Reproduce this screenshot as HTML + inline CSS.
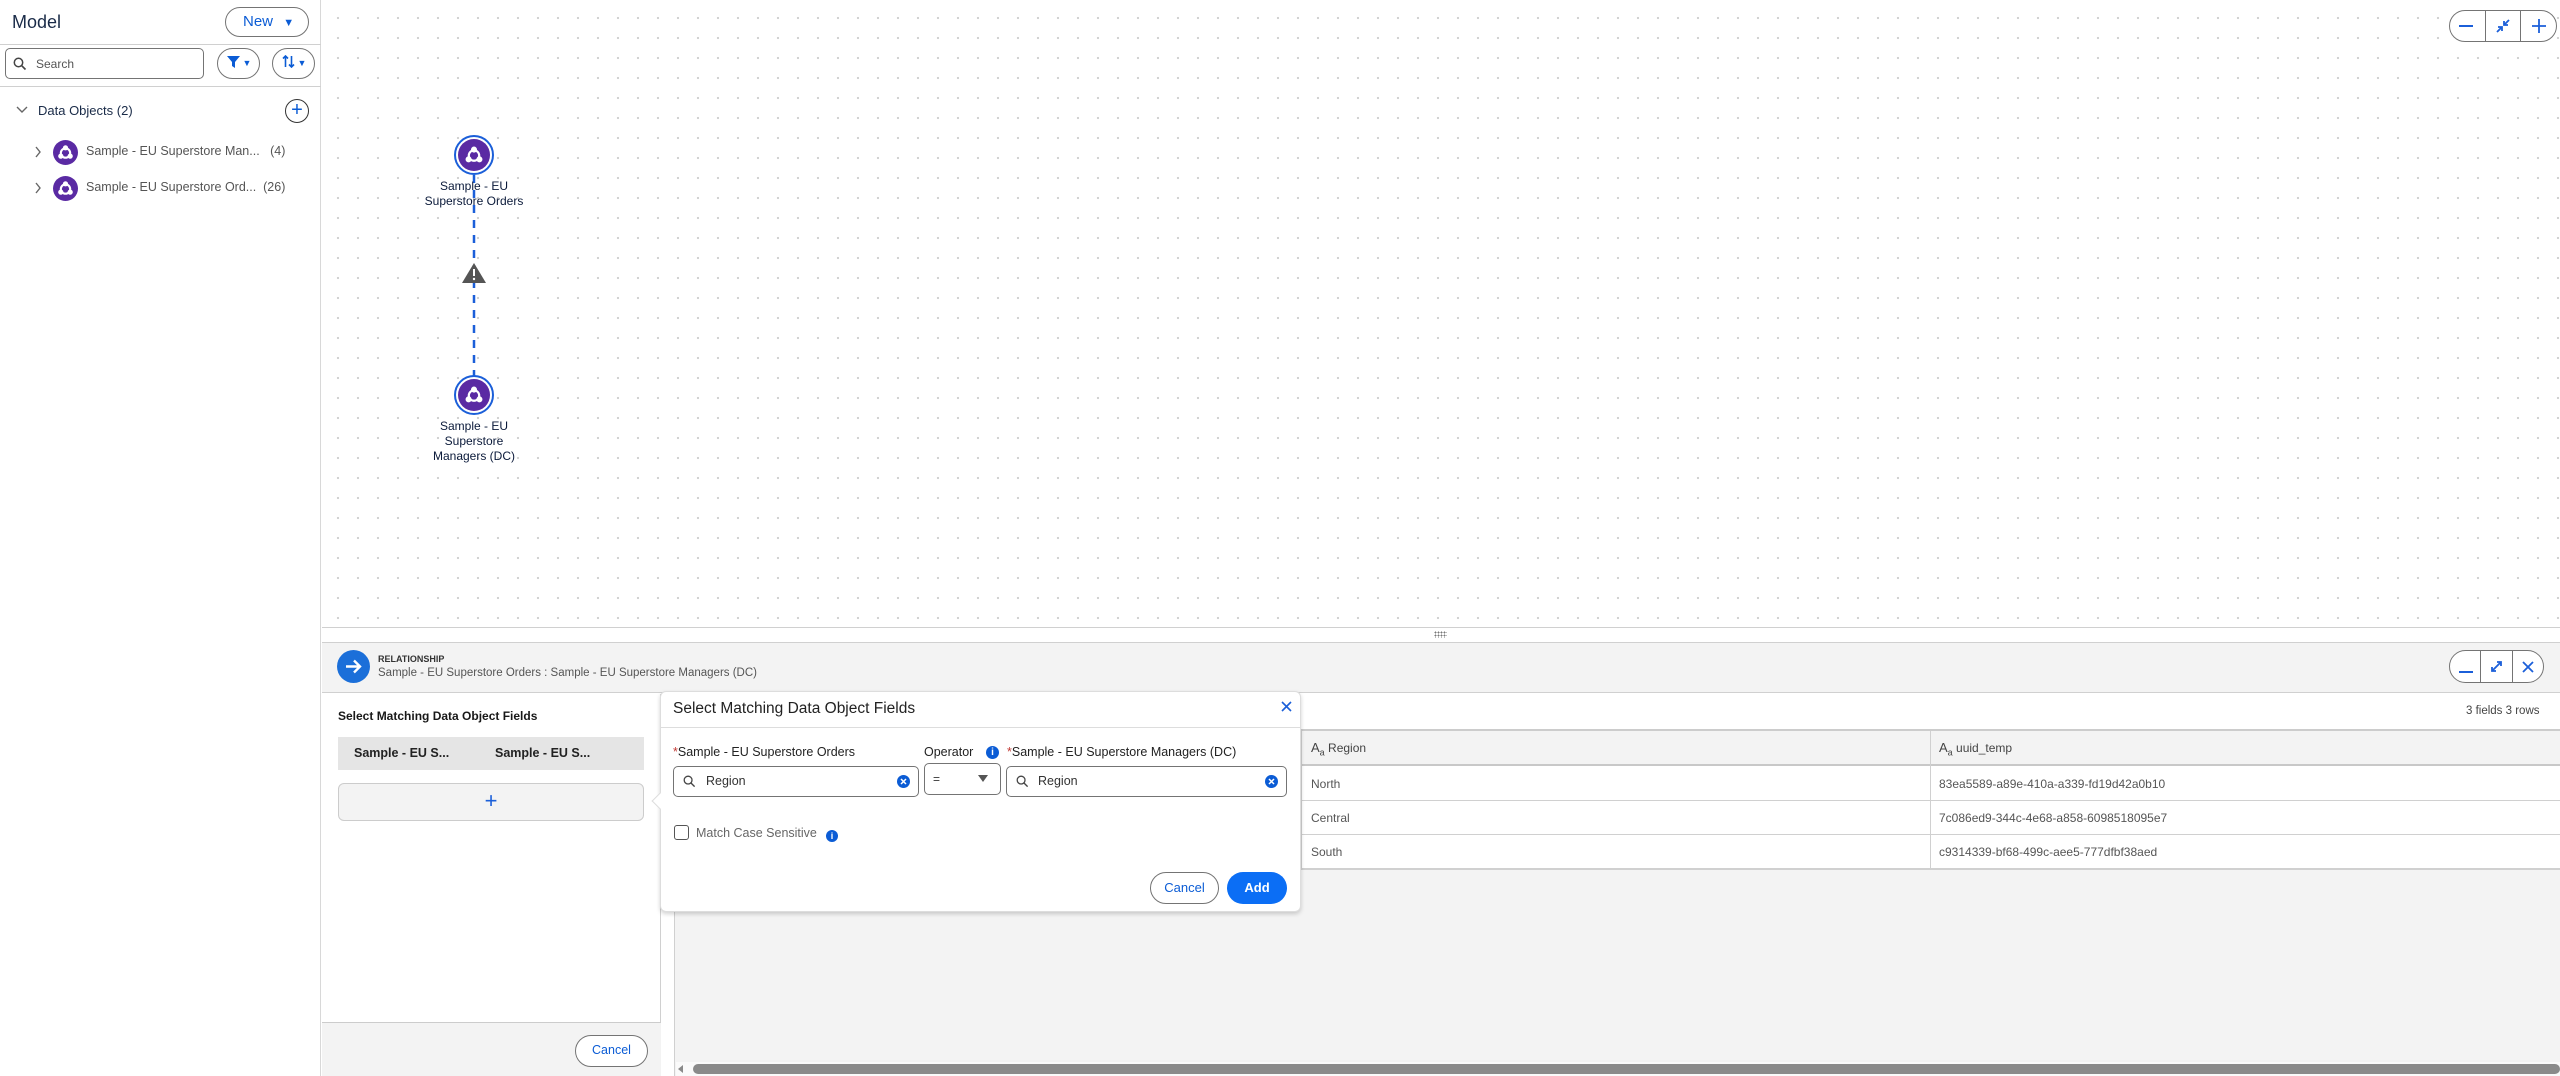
<!DOCTYPE html>
<html><head><meta charset="utf-8"><style>
*{box-sizing:border-box;margin:0;padding:0}
body{width:2560px;height:1076px;overflow:hidden;font-family:"Liberation Sans",sans-serif;background:#fff;position:relative;color:#181818}
.a{position:absolute}
.pill{border:1.5px solid #747474;border-radius:18px;background:#fff}
.blue{color:#0b5cd5}
.canvas{left:322px;top:0;width:2238px;height:627px;background-color:#fff;background-image:radial-gradient(circle,#cfcfcf 1px,transparent 1.3px);background-size:20px 20px;background-position:6px 8px}
.node{width:40px;height:40px;border-radius:50%;border:2px solid #1b5fd9;background:#fff;padding:2px}
.node div{width:100%;height:100%;border-radius:50%;background:#5a2aa3;display:flex;align-items:center;justify-content:center}
.lbl{font-size:12px;color:#0b1a3a;text-align:center;line-height:15px;width:120px;left:414px}
.hdr{font-size:12px;color:#444}
.cell{font-size:12px;color:#555}
</style></head><body>

<div class="a" style="left:0;top:0;width:321px;height:1076px;border-right:1px solid #d8d8d8;background:#fff">
 <div class="a" style="left:12px;top:12px;font-size:18px;color:#1a2b48">Model</div>
 <div class="a pill blue" style="left:225px;top:7px;width:84px;height:30px;font-size:15px;line-height:27px;padding-left:17px">New <span style="font-size:11px;margin-left:6px">&#9660;</span></div>
 <div class="a" style="left:0;top:44px;width:321px;border-top:1px solid #d0d0d0"></div>
 <div class="a" style="left:5px;top:48px;width:199px;height:31px;border:1px solid #747474;border-radius:5px">
  <svg class="a" style="left:7px;top:8px" width="14" height="14" viewBox="0 0 14 14"><circle cx="5.5" cy="5.5" r="4.2" fill="none" stroke="#444" stroke-width="1.5"/><path d="M8.6 8.6L12.5 12.5" stroke="#444" stroke-width="1.6"/></svg>
  <span class="a" style="left:30px;top:8px;font-size:12px;color:#555">Search</span>
 </div>
 <div class="a pill blue" style="left:217px;top:48px;width:43px;height:31px;border-radius:16px;font-size:9px;line-height:28px;padding-left:9px"><svg width="13" height="12" viewBox="0 0 13 12" style="vertical-align:-2px"><path d="M0 0H13L8 6V12L5 10V6Z" fill="#0b5cd5"/></svg> &#9660;</div>
 <div class="a pill blue" style="left:272px;top:48px;width:43px;height:31px;border-radius:16px;font-size:9px;line-height:28px;padding-left:9px"><svg width="13" height="13" viewBox="0 0 13 13" style="vertical-align:-2px"><path d="M3.5 12V1M1 3.5L3.5 1L6 3.5M9.5 1V12M7 9.5L9.5 12L12 9.5" fill="none" stroke="#0b5cd5" stroke-width="1.6"/></svg> &#9660;</div>
 <div class="a" style="left:0;top:86px;width:321px;border-top:1px solid #d0d0d0"></div>
 <svg class="a" style="left:16px;top:105px" width="12" height="10" viewBox="0 0 12 10"><path d="M1 2L6 7L11 2" fill="none" stroke="#666" stroke-width="1.4"/></svg>
 <div class="a" style="left:38px;top:103px;font-size:13px;color:#1a2b48">Data Objects (2)</div>
 <div class="a" style="left:285px;top:99px;width:24px;height:24px;border:1.3px solid #333;border-radius:50%;text-align:center;line-height:20px;font-size:20px;color:#0b5cd5">+</div>
 <svg class="a" style="left:34px;top:146px" width="8" height="12" viewBox="0 0 8 12"><path d="M2 1L6 6L2 11" fill="none" stroke="#666" stroke-width="1.4"/></svg>
 <svg class="a" style="left:34px;top:182px" width="8" height="12" viewBox="0 0 8 12"><path d="M2 1L6 6L2 11" fill="none" stroke="#666" stroke-width="1.4"/></svg>
 <svg class="a" style="left:53px;top:140px" width="25" height="25" viewBox="0 0 24 24"><circle cx="12" cy="12" r="12" fill="#5a2aa3"/><circle cx="12" cy="12.5" r="4.5" fill="none" stroke="#fff" stroke-width="2"/><circle cx="12" cy="7.5" r="2.5" fill="#fff"/><circle cx="7.5" cy="15.5" r="2.5" fill="#fff"/><circle cx="16.5" cy="15.5" r="2.5" fill="#fff"/></svg>
 <svg class="a" style="left:53px;top:176px" width="25" height="25" viewBox="0 0 24 24"><circle cx="12" cy="12" r="12" fill="#5a2aa3"/><circle cx="12" cy="12.5" r="4.5" fill="none" stroke="#fff" stroke-width="2"/><circle cx="12" cy="7.5" r="2.5" fill="#fff"/><circle cx="7.5" cy="15.5" r="2.5" fill="#fff"/><circle cx="16.5" cy="15.5" r="2.5" fill="#fff"/></svg>
 <div class="a" style="left:86px;top:144px;font-size:12.5px;color:#555">Sample - EU Superstore Man...&nbsp;&nbsp;&nbsp;(4)</div>
 <div class="a" style="left:86px;top:180px;font-size:12.5px;color:#555">Sample - EU Superstore Ord...&nbsp;&nbsp;(26)</div>
</div>

<div class="a canvas"></div>
<svg class="a" style="left:464px;top:175px" width="20" height="220" viewBox="0 0 20 220"><path d="M10 0V220" stroke="#1b5fd9" stroke-width="2.5" stroke-dasharray="8 7"/></svg>
<svg class="a" style="left:461px;top:262px" width="26" height="22" viewBox="0 0 26 22"><path d="M13 1L25 21H1Z" fill="#555"/><path d="M13 7V14" stroke="#fff" stroke-width="2"/><circle cx="13" cy="17" r="1.2" fill="#fff"/></svg>
<div class="a node" style="left:454px;top:135px"><div><svg width="26" height="26" viewBox="0 0 24 24"><circle cx="12" cy="12.5" r="4.8" fill="none" stroke="#fff" stroke-width="2"/><circle cx="12" cy="7" r="2.8" fill="#fff"/><circle cx="7" cy="16" r="2.8" fill="#fff"/><circle cx="17" cy="16" r="2.8" fill="#fff"/></svg></div></div>
<div class="a lbl" style="top:179px">Sample - EU<br>Superstore Orders</div>
<div class="a node" style="left:454px;top:375px"><div><svg width="26" height="26" viewBox="0 0 24 24"><circle cx="12" cy="12.5" r="4.8" fill="none" stroke="#fff" stroke-width="2"/><circle cx="12" cy="7" r="2.8" fill="#fff"/><circle cx="7" cy="16" r="2.8" fill="#fff"/><circle cx="17" cy="16" r="2.8" fill="#fff"/></svg></div></div>
<div class="a lbl" style="top:419px">Sample - EU<br>Superstore<br>Managers (DC)</div>

<div class="a pill" style="left:2449px;top:10px;width:108px;height:32px;border-radius:16px;display:flex">
 <div style="flex:1;border-right:1px solid #747474;position:relative"><div class="a" style="left:9px;top:14px;width:14px;height:2px;background:#1b5fd9"></div></div>
 <div style="flex:1;border-right:1px solid #747474;display:flex;align-items:center;justify-content:center"><svg width="14" height="14" viewBox="0 0 14 14"><path d="M13 1L8.5 5.5M8 2V6H12M1 13L5.5 8.5M6 12V8H2" fill="none" stroke="#1b5fd9" stroke-width="1.8"/></svg></div>
 <div style="flex:1;display:flex;align-items:center;justify-content:center"><svg width="16" height="16" viewBox="0 0 16 16"><path d="M8 1V15M1 8H15" stroke="#1b5fd9" stroke-width="1.8"/></svg></div>
</div>

<div class="a" style="left:322px;top:627px;width:2238px;height:16px;border-top:1px solid #d0d0d0;border-bottom:1px solid #d0d0d0;background:#fff"></div>
<div class="a" style="left:1434px;top:631px;width:13px;height:7px;background-image:radial-gradient(circle,#777 0.8px,transparent 1px);background-size:3px 3px"></div>

<div class="a" style="left:322px;top:643px;width:2238px;height:50px;background:#f3f3f3;border-bottom:1px solid #d0d0d0"></div>
<div class="a" style="left:337px;top:650px;width:33px;height:33px;border-radius:50%;background:#1b6fd9"><svg width="33" height="33" viewBox="0 0 33 33"><path d="M9 16.5H23M17 10.5L23 16.5L17 22.5" fill="none" stroke="#fff" stroke-width="2.4"/></svg></div>
<div class="a" style="left:378px;top:654px;font-size:9px;color:#333;font-weight:bold">RELATIONSHIP</div>
<div class="a" style="left:378px;top:667px;font-size:11.5px;color:#555">Sample - EU Superstore Orders : Sample - EU Superstore Managers (DC)</div>
<div class="a pill" style="left:2449px;top:650px;width:95px;height:33px;border-radius:17px;display:flex">
 <div style="flex:1;border-right:1px solid #747474;position:relative"><div class="a" style="left:9px;top:20px;width:14px;height:2px;background:#1b5fd9"></div></div>
 <div style="flex:1;border-right:1px solid #747474;display:flex;align-items:center;justify-content:center"><svg width="13" height="13" viewBox="0 0 13 13"><path d="M2 11L11 2M7 2H11V6M2 7V11H6" fill="none" stroke="#1b5fd9" stroke-width="1.8"/></svg></div>
 <div style="flex:1;display:flex;align-items:center;justify-content:center"><svg width="12" height="12" viewBox="0 0 12 12"><path d="M1 1L11 11M11 1L1 11" stroke="#1b5fd9" stroke-width="1.8"/></svg></div>
</div>

<div class="a" style="left:322px;top:694px;width:339px;height:382px;background:#fff;border-right:1px solid #d0d0d0"></div>
<div class="a" style="left:338px;top:709px;font-size:12px;font-weight:bold;color:#181818">Select Matching Data Object Fields</div>
<div class="a" style="left:338px;top:737px;width:306px;height:33px;background:#e5e5e5;font-size:12.5px;font-weight:bold;color:#222">
 <span class="a" style="left:16px;top:9px">Sample - EU S...</span><span class="a" style="left:157px;top:9px">Sample - EU S...</span></div>
<div class="a" style="left:338px;top:783px;width:306px;height:38px;background:#f3f3f3;border:1px solid #ccc;border-radius:6px;text-align:center;font-size:22px;line-height:34px;color:#1b5fd9">+</div>
<div class="a" style="left:322px;top:1022px;width:339px;height:54px;background:#f3f3f3;border-top:1px solid #ccc"></div>
<div class="a pill blue" style="left:575px;top:1035px;width:73px;height:32px;border-radius:16px;font-size:12.5px;text-align:center;line-height:29px">Cancel</div>

<div class="a" style="left:674px;top:694px;width:1886px;height:382px;background:#f3f3f3;border-left:1px solid #d0d0d0"></div>
<div class="a" style="left:674px;top:694px;width:1886px;height:37px;background:#fff;border-bottom:2px solid #ccc"></div>
<div class="a" style="left:2466px;top:705px;font-size:11.5px;color:#444">3 fields 3 rows</div>
<div class="a" style="left:674px;top:731px;width:1886px;height:137px;background:#fff"></div>
<div class="a" style="left:674px;top:731px;width:1886px;height:35px;background:#f3f3f3;border-bottom:2px solid #c8c8c8"></div>
<div class="a" style="left:674px;top:800px;width:1886px;border-top:1px solid #d0d0d0"></div>
<div class="a" style="left:674px;top:834px;width:1886px;border-top:1px solid #d0d0d0"></div>
<div class="a" style="left:674px;top:868px;width:1886px;border-top:2px solid #d0d0d0"></div>
<div class="a" style="left:1301px;top:731px;height:137px;border-left:1px solid #d0d0d0"></div>
<div class="a" style="left:1930px;top:731px;height:137px;border-left:1px solid #d0d0d0"></div>
<div class="a hdr" style="left:1311px;top:740px"><span style="font-size:13px">A</span><sub style="font-size:9px">a</sub> Region</div>
<div class="a hdr" style="left:1939px;top:740px"><span style="font-size:13px">A</span><sub style="font-size:9px">a</sub> uuid_temp</div>
<div class="a cell" style="left:1311px;top:777px">North</div>
<div class="a cell" style="left:1311px;top:811px">Central</div>
<div class="a cell" style="left:1311px;top:845px">South</div>
<div class="a cell" style="left:1939px;top:777px">83ea5589-a89e-410a-a339-fd19d42a0b10</div>
<div class="a cell" style="left:1939px;top:811px">7c086ed9-344c-4e68-a858-6098518095e7</div>
<div class="a cell" style="left:1939px;top:845px">c9314339-bf68-499c-aee5-777dfbf38aed</div>
<div class="a" style="left:676px;top:1062px;width:1884px;height:14px;background:#fafafa"></div>
<div class="a" style="left:693px;top:1064px;width:1867px;height:10px;border-radius:5px;background:#8a8a8a"></div>
<div class="a" style="left:678px;top:1065px;width:0;height:0;border-top:4px solid transparent;border-bottom:4px solid transparent;border-right:5px solid #8a8a8a"></div>

<div class="a" style="left:660px;top:691px;width:641px;height:221px;background:#fff;border:1px solid #ddd;border-radius:6px;box-shadow:0 2px 4px rgba(0,0,0,.18)"></div>
<div class="a" style="left:654px;top:795px;width:12px;height:12px;background:#fff;transform:rotate(45deg);border-left:1px solid #ddd;border-bottom:1px solid #ddd"></div>
<div class="a" style="left:673px;top:700px;font-size:15.5px;color:#222">Select Matching Data Object Fields</div>
<svg class="a" style="left:1281px;top:701px" width="11" height="11" viewBox="0 0 11 11"><path d="M1 1L10 10M10 1L1 10" stroke="#1b5fd9" stroke-width="1.6"/></svg>
<div class="a" style="left:661px;top:727px;width:639px;border-top:1px solid #ddd"></div>
<div class="a" style="left:673px;top:745px;font-size:12.5px;color:#222"><span style="color:#c23934">*</span>Sample - EU Superstore Orders</div>
<div class="a" style="left:924px;top:745px;font-size:12.5px;color:#222">Operator</div>
<div class="a" style="left:986px;top:746px;width:13px;height:13px;border-radius:50%;background:#0b5cd5;color:#fff;font-size:10px;font-weight:bold;text-align:center;line-height:13px">i</div>
<div class="a" style="left:1007px;top:745px;font-size:12.5px;color:#222"><span style="color:#c23934">*</span>Sample - EU Superstore Managers (DC)</div>
<div class="a" style="left:673px;top:766px;width:246px;height:31px;border:1px solid #747474;border-radius:5px"></div>
<div class="a" style="left:924px;top:763px;width:77px;height:32px;border:1px solid #747474;border-radius:5px"></div>
<div class="a" style="left:1006px;top:766px;width:281px;height:31px;border:1px solid #747474;border-radius:5px"></div>
<svg class="a" style="left:683px;top:775px" width="13" height="13" viewBox="0 0 14 14"><circle cx="5.5" cy="5.5" r="4.2" fill="none" stroke="#444" stroke-width="1.4"/><path d="M8.6 8.6L12.5 12.5" stroke="#444" stroke-width="1.5"/></svg>
<svg class="a" style="left:1016px;top:775px" width="13" height="13" viewBox="0 0 14 14"><circle cx="5.5" cy="5.5" r="4.2" fill="none" stroke="#444" stroke-width="1.4"/><path d="M8.6 8.6L12.5 12.5" stroke="#444" stroke-width="1.5"/></svg>
<div class="a" style="left:706px;top:774px;font-size:12.5px;color:#333">Region</div>
<div class="a" style="left:1038px;top:774px;font-size:12.5px;color:#333">Region</div>
<svg class="a" style="left:897px;top:775px" width="13" height="13" viewBox="0 0 13 13"><circle cx="6.5" cy="6.5" r="6.5" fill="#0b5cd5"/><path d="M4 4L9 9M9 4L4 9" stroke="#fff" stroke-width="1.5"/></svg>
<svg class="a" style="left:1265px;top:775px" width="13" height="13" viewBox="0 0 13 13"><circle cx="6.5" cy="6.5" r="6.5" fill="#0b5cd5"/><path d="M4 4L9 9M9 4L4 9" stroke="#fff" stroke-width="1.5"/></svg>
<div class="a" style="left:933px;top:772px;font-size:12px;color:#333">=</div>
<div class="a" style="left:978px;top:775px;width:0;height:0;border-left:5px solid transparent;border-right:5px solid transparent;border-top:7px solid #555"></div>
<div class="a" style="left:674px;top:825px;width:15px;height:15px;border:1px solid #555;border-radius:3px"></div>
<div class="a" style="left:696px;top:826px;font-size:12.5px;color:#666">Match Case Sensitive</div>
<div class="a" style="left:826px;top:830px;width:12px;height:12px;border-radius:50%;background:#0b5cd5;color:#fff;font-size:9px;font-weight:bold;text-align:center;line-height:12px">i</div>
<div class="a pill blue" style="left:1150px;top:872px;width:69px;height:32px;border-radius:16px;font-size:13px;text-align:center;line-height:29px">Cancel</div>
<div class="a" style="left:1227px;top:872px;width:60px;height:32px;border-radius:16px;background:#0b6ef5;color:#fff;font-size:13px;font-weight:bold;text-align:center;line-height:32px">Add</div>

</body></html>
